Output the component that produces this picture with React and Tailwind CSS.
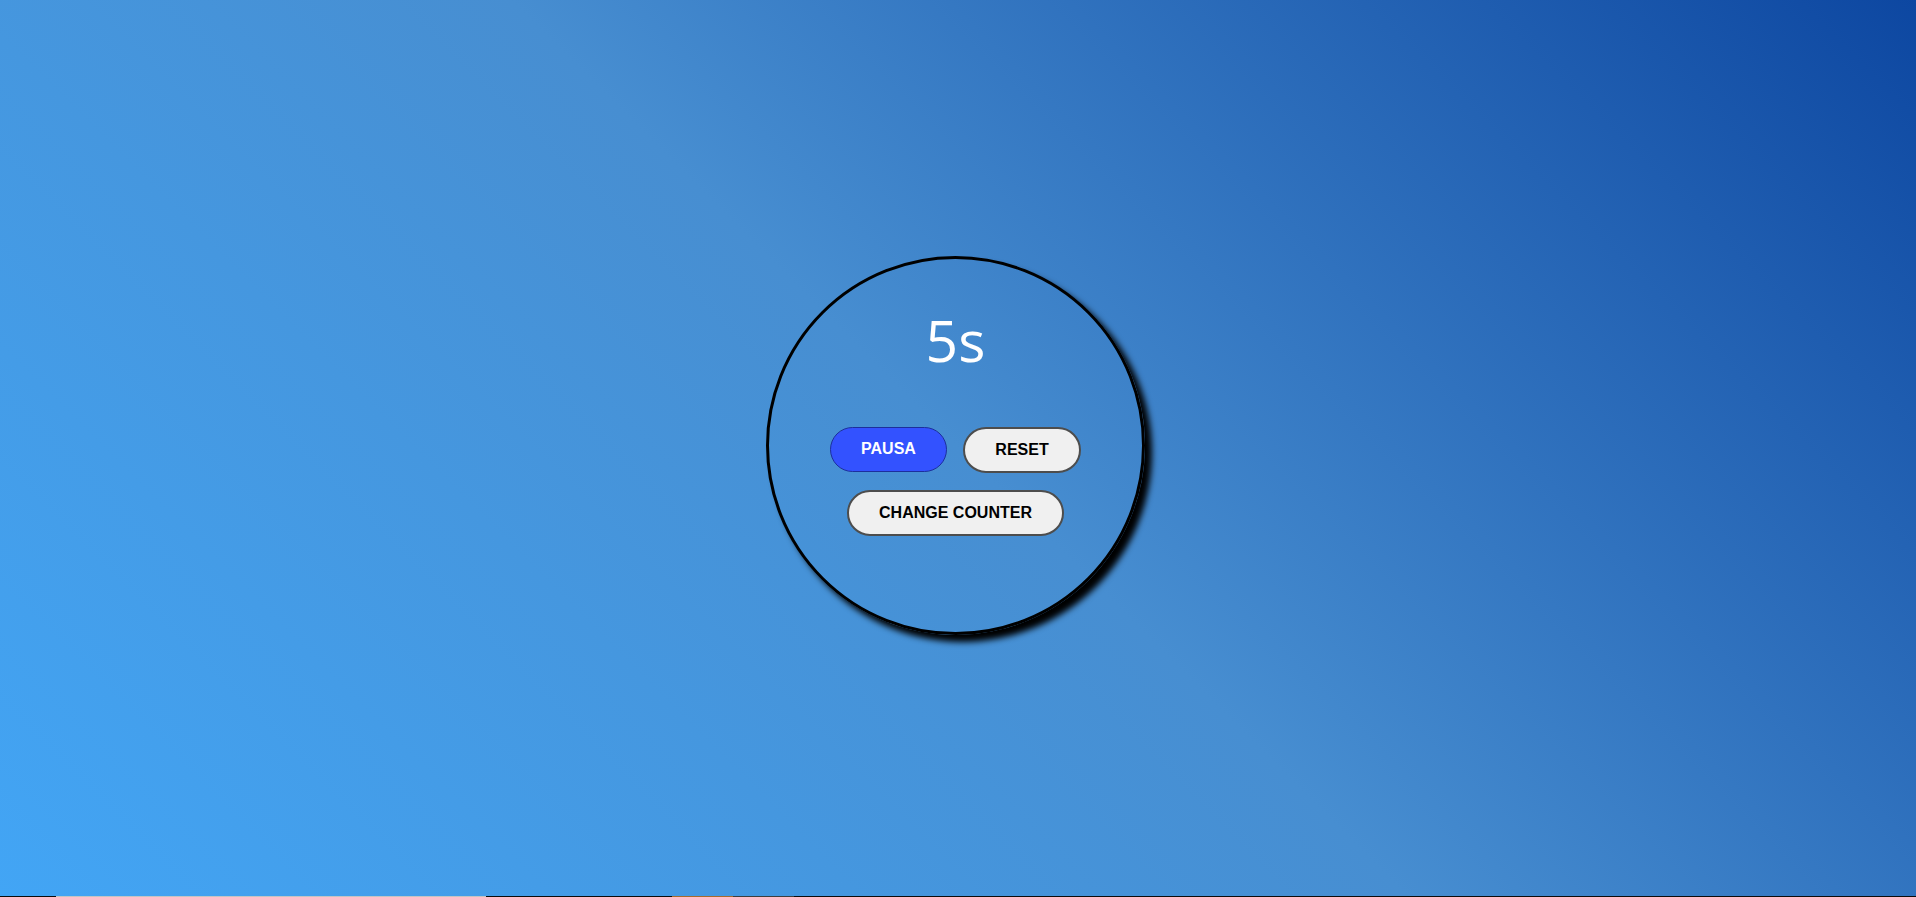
export default function App() {
  return (
    <div className="flex h-[897px] w-full flex-col overflow-hidden font-['Liberation_Sans',Arial,sans-serif]">
      <main className="flex h-[896px] items-center justify-center bg-[linear-gradient(45deg,#42a5f5_0%,#478ed1_50%,#0d47a1_100%)] pr-[5px] pb-[6px]">
        <div className="flex h-[379px] w-[379px] flex-col items-center rounded-full border-[3px] border-black pt-[42px] shadow-[7px_7px_6px_#000]">
          <h1 className="font-['Open_Sans',sans-serif] text-[57px] leading-[79px] font-normal text-white">5s</h1>
          <div className="mt-[47px] flex gap-4">
            <button className="h-[45px] w-[117px] rounded-full border border-[#1c2f9c] bg-[#3352ff] text-base font-bold text-white">
              PAUSA
            </button>
            <button className="h-[46px] w-[118px] rounded-full border-2 border-[#4d4d4d] bg-[#f0f0f0] text-base font-bold text-black">
              RESET
            </button>
          </div>
          <button className="mt-[17px] h-[46px] w-[217px] rounded-full border-2 border-[#4d4d4d] bg-[#f0f0f0] text-base font-bold text-black">
            CHANGE COUNTER
          </button>
        </div>
      </main>
      <div className="flex h-px bg-[#0c0c0c]">
        <div className="w-[56px]" />
        <div className="w-[430px] bg-[#c4c4c4]" />
        <div className="w-[186px]" />
        <div className="w-[61px] bg-[#a86a2c]" />
        <div className="w-[61px] bg-[#3e3e3e]" />
      </div>
    </div>
  );
}
